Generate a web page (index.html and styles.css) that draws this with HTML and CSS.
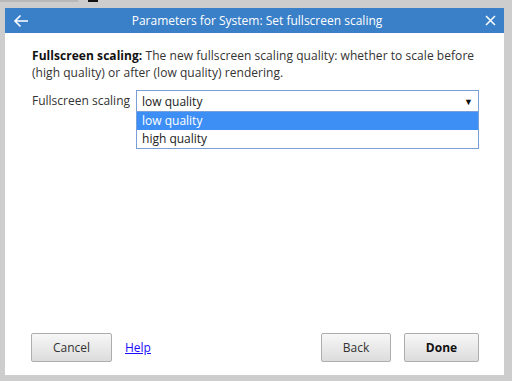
FILE: index.html
```html
<!DOCTYPE html>
<html lang="en">
<head>
    <meta charset="UTF-8">
    <title>Parameters for System: Set fullscreen scaling</title>
    <link rel="stylesheet" href="styles.css">
</head>
<body>
    <div class="strip">
        <div class="strip-left"></div>
        <div class="strip-mark"></div>
    </div>

    <div class="dialog">
        <div class="header">
            <svg class="icon back-icon" width="16" height="14" viewBox="0 0 16 14">
                <path d="M15 7H2M7.5 1.5L2 7l5.5 5.5" fill="none" stroke="#fff" stroke-width="1.6"/>
            </svg>
            <div class="title">Parameters for System: Set fullscreen scaling</div>
            <svg class="icon close-icon" width="11" height="11" viewBox="0 0 11 11">
                <path d="M1 1l9 9M10 1l-9 9" fill="none" stroke="#fff" stroke-width="1.5"/>
            </svg>
        </div>

        <div class="content">
            <p class="desc"><b>Fullscreen scaling:</b> The new fullscreen scaling quality: whether to scale before (high quality) or after (low quality) rendering.</p>

            <div class="field">
                <label class="field-label">Fullscreen scaling</label>
                <div class="select-wrap">
                    <div class="select">
                        <span>low quality</span>
                        <span class="caret">&#9660;</span>
                    </div>
                    <div class="options">
                        <div class="option selected">low quality</div>
                        <div class="option">high quality</div>
                    </div>
                </div>
            </div>
        </div>

        <div class="footer">
            <button class="btn">Cancel</button>
            <a href="#" class="help">Help</a>
            <div class="spacer"></div>
            <button class="btn btn-back">Back</button>
            <button class="btn btn-primary">Done</button>
        </div>
    </div>
</body>
</html>
```

FILE: styles.css
```css
body {
    margin: 0;
    width: 512px;
    height: 381px;
    background-color: #cdcdcd;
    font-family: "Open Sans", "Noto Sans", sans-serif;
    font-size: 12px;
    color: #333;
    overflow: hidden;
}
.strip {
    display: flex;
    height: 2px;
    margin-bottom: 6px;
}
.strip-left {
    width: 78px;
    background-color: #b8b8b8;
}
.strip-mark {
    width: 10px;
    margin-left: 10px;
    background-color: #111;
}
.dialog {
    margin-left: 5px;
    width: 499px;
    height: 367px;
    background: white;
    display: flex;
    flex-direction: column;
}
.header {
    height: 25px;
    background-color: #3a80c8;
    display: flex;
    align-items: center;
    padding: 0 8px;
    color: white;
}
.title {
    flex: 1;
    text-align: center;
    font-size: 12px;
}
.content {
    flex: 1;
    padding: 14px 25px 0 27px;
}
.desc {
    margin: 0;
    line-height: 17px;
    letter-spacing: 0.05px;
}
.desc b {
    color: #111;
}
.field {
    display: flex;
    align-items: flex-start;
    margin-top: 9px;
}
.field-label {
    line-height: 22px;
    margin-right: 6px;
}
.select-wrap {
    flex: 1;
    display: flex;
    flex-direction: column;
}
.select {
    height: 20px;
    border: 1px solid #7a9fd8;
    display: flex;
    align-items: center;
    justify-content: space-between;
    padding: 0 5px;
    color: #222;
}
.caret {
    font-size: 9px;
    color: #111;
}
.options {
    border: 1px solid #7a9fd8;
    border-top: none;
}
.option {
    height: 18px;
    line-height: 18px;
    padding-left: 5px;
    color: #222;
}
.option.selected {
    background-color: #3d8ff6;
    color: white;
}
.footer {
    display: flex;
    align-items: center;
    padding: 0 25px 13px 26px;
}
.btn {
    height: 29px;
    width: 81px;
    font-family: "Open Sans", "Noto Sans", sans-serif;
    font-size: 12px;
    color: #333;
    border: 1px solid #adadad;
    border-radius: 2px;
    background: linear-gradient(#f7f7f7, #dcdcdc);
    padding: 0;
}
.btn + .btn {
    margin-left: 13px;
}
.btn-back {
    width: 70px;
}
.btn-primary {
    width: 75px;
    font-weight: bold;
    color: #111;
}
.help {
    margin-left: 13px;
    color: #1a0dff;
    font-size: 12px;
}
.spacer {
    flex: 1;
}
```
